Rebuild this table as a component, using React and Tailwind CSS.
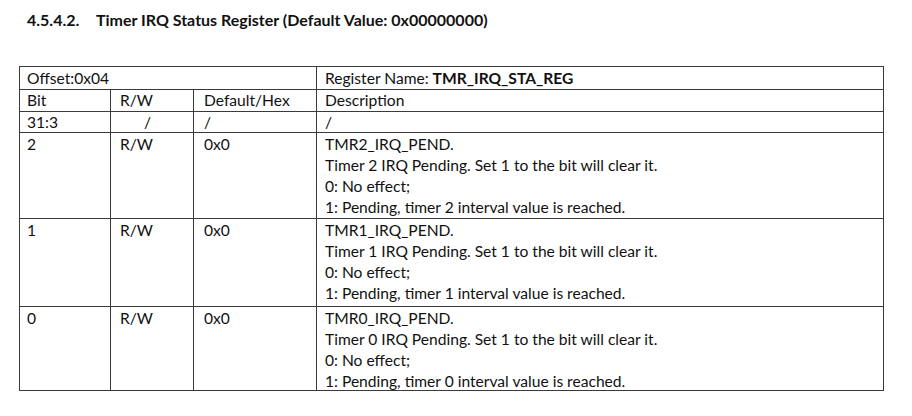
import React from 'react';

const fields = [
  { n: '2', h: 'h-[86px]' },
  { n: '1', h: 'h-[88px]' },
  { n: '0', h: 'h-[84px]' },
];

const line = 'border-[#3a3a3a]';

function Row({ h, children }) {
  return <div className={`flex border-b ${line} ${h}`}>{children}</div>;
}

function Cell({ w, className = '', children }) {
  return <div className={`border-r ${line} shrink-0 ${w} ${className}`}>{children}</div>;
}

export default function App() {
  return (
    <div className="w-[912px] h-[416px] bg-white text-[#111] font-['Lato','Liberation_Sans',sans-serif] text-[15.6px]">
      <div className="pt-[9px] pl-[27px] font-bold text-[16px] leading-[22px]">
        <span className="inline-block w-[69px]">4.5.4.2.</span>
        Timer IRQ Status Register (Default Value: 0x00000000)
      </div>

      <div className={`mt-[35px] ml-[19px] w-[865px] border-l border-t ${line} leading-[21px]`}>
        <Row h="h-[23px]">
          <Cell w="w-[297px]" className="pl-[7px] pt-[1px]">Offset:0x04</Cell>
          <Cell w="w-[567px]" className="pl-[8px] pt-[1px]">
            Register Name: <span className="font-bold">TMR_IRQ_STA_REG</span>
          </Cell>
        </Row>
        <Row h="h-[22px]">
          <Cell w="w-[91px]" className="pl-[7px]">Bit</Cell>
          <Cell w="w-[83px]" className="pl-[9px]">R/W</Cell>
          <Cell w="w-[123px]" className="pl-[10px]">Default/Hex</Cell>
          <Cell w="w-[567px]" className="pl-[8px]">Description</Cell>
        </Row>
        <Row h="h-[21px]">
          <Cell w="w-[91px]" className="pl-[7px]">31:3</Cell>
          <Cell w="w-[83px]" className="pl-[33px]">/</Cell>
          <Cell w="w-[123px]" className="pl-[10px]">/</Cell>
          <Cell w="w-[567px]" className="pl-[8px]">/</Cell>
        </Row>
        {fields.map((f) => (
          <Row key={f.n} h={f.h}>
            <Cell w="w-[91px]" className="pl-[7px] pt-[1px]">{f.n}</Cell>
            <Cell w="w-[83px]" className="pl-[9px] pt-[1px]">R/W</Cell>
            <Cell w="w-[123px]" className="pl-[10px] pt-[1px]">0x0</Cell>
            <Cell w="w-[567px]" className="pl-[8px] pt-[1px]">
              <div>TMR{f.n}_IRQ_PEND.</div>
              <div>Timer {f.n} IRQ Pending. Set 1 to the bit will clear it.</div>
              <div>0: No effect;</div>
              <div>1: Pending, timer {f.n} interval value is reached.</div>
            </Cell>
          </Row>
        ))}
      </div>
    </div>
  );
}
